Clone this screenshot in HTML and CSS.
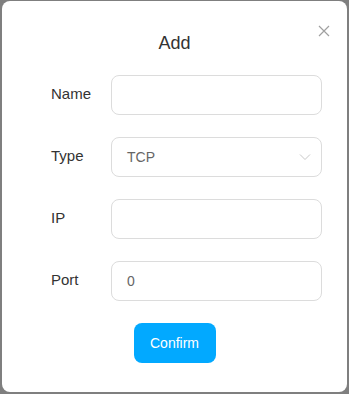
FILE: index.html
```html
<!DOCTYPE html>
<html lang="en">
<head>
    <meta charset="UTF-8">
    <meta name="viewport" content="width=device-width, initial-scale=1.0">
    <title>Add</title>
    <link rel="stylesheet" href="styles.css">
</head>
<body>
    <div class="dialog">
        <span class="close">
            <svg width="12" height="12" viewBox="0 0 12 12"><path d="M1 1L11 11M11 1L1 11" stroke="#a0a0a0" stroke-width="1.2"/></svg>
        </span>
        <h2 class="title">Add</h2>
        <form class="form">
            <div class="form-row">
                <label for="name">Name</label>
                <input type="text" id="name" class="field">
            </div>
            <div class="form-row">
                <label for="type">Type</label>
                <div class="field select">
                    <span>TCP</span>
                    <svg width="12" height="8" viewBox="0 0 12 8"><path d="M1 1.5L6 6.5L11 1.5" fill="none" stroke="#c8c8c8" stroke-width="1"/></svg>
                </div>
            </div>
            <div class="form-row">
                <label for="ip">IP</label>
                <input type="text" id="ip" class="field">
            </div>
            <div class="form-row">
                <label for="port">Port</label>
                <input type="text" id="port" class="field" value="0">
            </div>
            <div class="actions">
                <button type="button" class="btn-confirm">Confirm</button>
            </div>
        </form>
    </div>
</body>
</html>
```

FILE: styles.css
```css
body { margin: 0; background-color: #7f7f7f; font-family: "Liberation Sans", Arial, sans-serif; overflow: hidden; }
.dialog {
    position: relative;
    box-sizing: border-box;
    width: 345px;
    height: 391px;
    margin: 1px 0 0 2px;
    padding: 30px 25px 0 49px;
    background: white;
    border-radius: 8px;
}
.close { position: absolute; top: 24px; right: 17px; display: flex; }
.title { margin: 0 0 20px -24px; font-size: 18px; font-weight: normal; line-height: 24px; text-align: center; color: #333; }
.form-row { display: flex; align-items: center; margin-bottom: 22px; }
.form-row label { width: 60px; padding-bottom: 3px; font-size: 15px; color: #333; }
.field {
    box-sizing: border-box;
    width: 211px;
    height: 40px;
    padding: 0 15px;
    border: 1px solid #dcdcdc;
    border-radius: 8px;
    font-family: inherit;
    font-size: 14px;
    color: #666;
    outline: none;
}
.select { display: flex; align-items: center; justify-content: space-between; padding-right: 10px; }
.actions { display: flex; justify-content: center; margin-left: -24px; }
.btn-confirm {
    width: 82px;
    height: 40px;
    border: none;
    border-radius: 8px;
    background-color: #02a9ff;
    color: white;
    font-family: inherit;
    font-size: 14px;
}
```
